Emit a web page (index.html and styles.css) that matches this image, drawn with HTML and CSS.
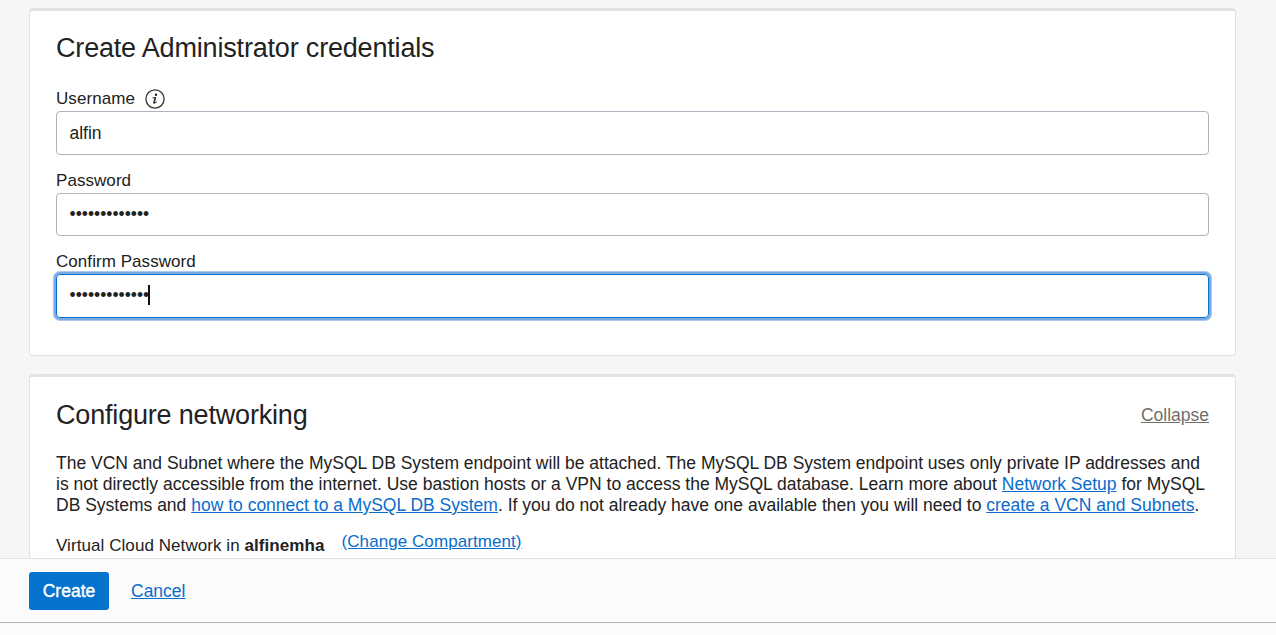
FILE: index.html
```
<!DOCTYPE html>
<html lang="en">
<head>
<meta charset="utf-8">
<title>Create MySQL DB System</title>
<link rel="stylesheet" href="styles.css">
</head>
<body>
<main class="content">
  <section class="card credentials">
    <h2 class="title">Create Administrator credentials</h2>
    <div class="field">
      <div class="label"><span>Username</span>
        <svg class="info" width="20" height="20" viewBox="0 0 20 20" fill="none" stroke="#333" stroke-linecap="round">
          <circle cx="10" cy="10" r="9.1" stroke-width="1.3"/>
          <circle cx="11" cy="5.8" r="1.2" fill="#222" stroke="none"/>
          <path d="M7.9 8.9 L10.4 8.5 L9 13.4 Q8.8 14.6 9.8 14.2 L11.8 12.8" stroke-width="1"/>
          <path d="M10.3 8.8 L9 13.7" stroke-width="1.6"/>
        </svg>
      </div>
      <div class="input">alfin</div>
    </div>
    <div class="field">
      <div class="label">Password</div>
      <div class="input short">•••••••••••••</div>
    </div>
    <div class="field">
      <div class="label">Confirm Password</div>
      <div class="input focused">•••••••••••••<span class="caret"></span></div>
    </div>
  </section>
  <section class="card networking">
    <div class="card-head">
      <h2 class="title">Configure networking</h2>
      <a class="collapse">Collapse</a>
    </div>
    <p class="description">The VCN and Subnet where the MySQL DB System endpoint will be attached. The MySQL DB System endpoint uses only private IP addresses and<br>is not directly accessible from the internet. Use bastion hosts or a VPN to access the MySQL database. Learn more about <a class="link">Network Setup</a> for MySQL<br>DB Systems and <a class="link">how to connect to a MySQL DB System</a>. If you do not already have one available then you will need to <a class="link">create a VCN and Subnets</a>.</p>
    <div class="compartment">
      <span class="network">Virtual Cloud Network in <b>alfinemha</b></span>
      <a class="link">(Change Compartment)</a>
    </div>
  </section>
</main>
<footer class="footer">
  <div class="actions">
    <button class="create">Create</button>
    <a class="link cancel">Cancel</a>
  </div>
</footer>
</body>
</html>
```
FILE: styles.css
```
* { box-sizing: border-box; }
body {
  margin: 0;
  height: 635px;
  display: flex;
  flex-direction: column;
  overflow: hidden;
  background: #f6f6f6;
  color: #222;
  font: 17.5px/21px "Liberation Sans", Arial, sans-serif;
}
.content {
  height: 558px;
  padding: 8px 40px 0 29px;
  overflow: hidden;
}
.card {
  background: #fff;
  border: 1px solid #e1e2e5;
  border-top: 3px solid #e1e1e6;
  border-radius: 4px;
  padding: 0 26px;
}
.credentials { height: 348px; padding-top: 21px; }
.networking { height: 260px; margin-top: 18px; padding-top: 22px; }
.title {
  margin: 0;
  font-size: 27px;
  font-weight: 400;
  letter-spacing: -0.18px;
  line-height: 32px;
}
.credentials .title { margin-bottom: 23px; }
.field { margin-bottom: 14px; }
.label {
  display: flex;
  align-items: center;
  gap: 10px;
  height: 24px;
  padding-bottom: 2px;
  font-size: 17px;
  letter-spacing: 0.06px;
}
.info { margin-top: 2px; }
.input {
  display: flex;
  align-items: center;
  height: 44px;
  padding: 0 12.5px;
  border: 1px solid #aeb3bf;
  border-radius: 4px;
}
.short { height: 43px; }
.focused {
  height: 44px;
  padding-bottom: 2px;
  border-color: #0572ce;
  box-shadow: 0 0 0 2px #78a9e3, 0 0 0 3px #a9c9ed;
}
.caret { width: 2px; height: 20px; margin-left: -1px; background: #111; }
.card-head {
  display: flex;
  justify-content: space-between;
  align-items: center;
}
.link { color: #0a6ccc; text-decoration: underline; }
.collapse { color: #706e6b; text-decoration: underline; }
.description { margin: 22px 0 0; white-space: nowrap; }
.compartment {
  display: flex;
  gap: 17px;
  margin-top: 15px;
  font-size: 17px;
  letter-spacing: 0.07px;
}
.network { padding-top: 4px; }
.footer {
  height: 77px;
  background: #fbfbfb;
  border-top: 1px solid #e1e1e3;
}
.actions {
  display: flex;
  align-items: center;
  gap: 22px;
  height: 64px;
  padding-left: 29px;
  border-bottom: 1px solid #b0b5c0;
}
.create {
  width: 80px;
  height: 38px;
  padding: 2px 0 0;
  border: 0;
  border-radius: 3px;
  background: #0572ce;
  color: #fff;
  font: inherit;
  -webkit-text-stroke: 0.4px #fff;
}
.cancel { padding-top: 2px; }
```
